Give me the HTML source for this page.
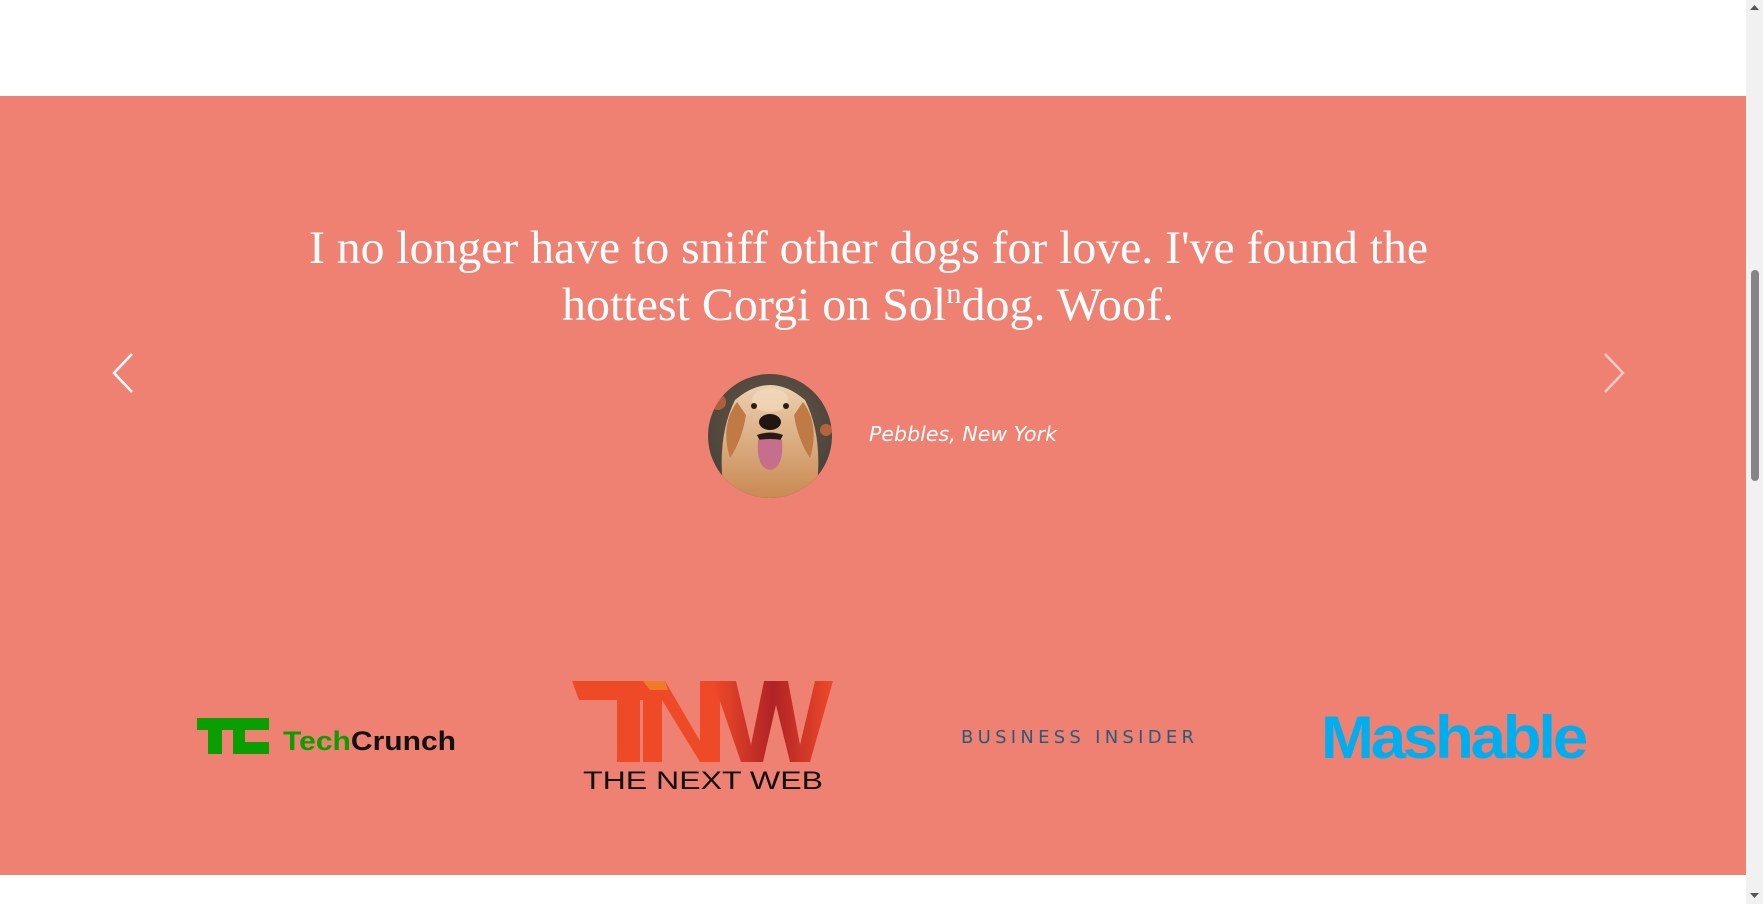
<!DOCTYPE html>
<html><head><meta charset="utf-8"><style>
html,body{margin:0;padding:0;width:1763px;height:904px;overflow:hidden;background:#fff}
</style></head><body>
<svg width="1763" height="904" viewBox="0 0 1763 904" xmlns="http://www.w3.org/2000/svg" style="display:block">
<defs>
<clipPath id="c"><circle cx="770" cy="436" r="62"/></clipPath>
<radialGradient id="bg" cx="0.5" cy="0.4" r="0.7"><stop offset="0" stop-color="#6a5a4a"/><stop offset="1" stop-color="#3e3a34"/></radialGradient>
<linearGradient id="fur" x1="0" y1="0" x2="0" y2="1"><stop offset="0" stop-color="#ecd0b0"/><stop offset="1" stop-color="#c98850"/></linearGradient>
<linearGradient id="tw" x1="0" y1="0" x2="1" y2="0"><stop offset="0" stop-color="#ef4a28"/><stop offset="0.5" stop-color="#b02326"/><stop offset="1" stop-color="#ef4a28"/></linearGradient>
</defs>
<rect x="0" y="96" width="1746" height="779" fill="#ef8172"/>
<rect x="1746" y="0" width="17" height="904" fill="#f1f1f1"/>
<rect x="1751" y="270" width="8" height="211" rx="4" fill="#858585"/>
<path d="M1750 10 l4.5 -5 l4.5 5z" fill="#555"/>
<path d="M1750 893 l4.5 5 l4.5 -5z" fill="#555"/>

<g font-family="Liberation Serif, serif" fill="#fff" font-size="47">
<text x="309" y="263" textLength="1119" lengthAdjust="spacingAndGlyphs">I no longer have to sniff other dogs for love. I've found the</text>
<text x="562" y="320" textLength="612" lengthAdjust="spacingAndGlyphs">hottest Corgi on Sol<tspan font-size="30" dy="-17">n</tspan><tspan dy="17">dog. Woof.</tspan></text>
</g>

<path d="M132 354 L114 373 L132 392" fill="none" stroke="#fff" stroke-width="2.5"/>
<path d="M1605 354 L1623 373 L1605 392" fill="none" stroke="#fff" stroke-opacity="0.6" stroke-width="2.5"/>

<g clip-path="url(#c)">
<rect x="700" y="370" width="140" height="140" fill="url(#bg)"/>
<circle cx="718" cy="402" r="8" fill="#d86a3a" opacity="0.7"/>
<circle cx="826" cy="430" r="6" fill="#e0713c" opacity="0.7"/>
<path d="M735 400 Q770 370 805 400 Q825 440 815 500 L725 500 Q715 440 735 400z" fill="url(#fur)"/>
<path d="M737 402 Q720 425 730 458 Q742 440 746 415z" fill="#c07a45"/>
<path d="M803 402 Q820 425 810 458 Q798 440 794 415z" fill="#c07a45"/>
<ellipse cx="770" cy="400" rx="18" ry="12" fill="#f3dcc0" opacity="0.6"/>
<circle cx="754" cy="406" r="3" fill="#2b1d15"/><circle cx="786" cy="406" r="3" fill="#2b1d15"/>
<ellipse cx="770" cy="422" rx="11" ry="8" fill="#1e1714"/>
<path d="M757 435 Q770 430 783 435 L778 445 L762 445z" fill="#2a1a16"/>
<path d="M758 440 Q770 438 782 440 Q784 468 770 470 Q756 468 758 440z" fill="#c66f8c"/>
</g>

<text x="869" y="441" font-family="DejaVu Sans, Liberation Sans, sans-serif" font-style="italic" font-size="20" fill="#fff" textLength="188" lengthAdjust="spacingAndGlyphs">Pebbles, New York</text>

<g fill="#0a9e01">
<rect x="197" y="718" width="36" height="12"/><rect x="208" y="718" width="14" height="36"/>
<rect x="233" y="718" width="36" height="12"/><rect x="233" y="718" width="12" height="36"/><rect x="233" y="742" width="36" height="12"/>
</g>
<text x="283" y="750" font-family="Liberation Sans, sans-serif" font-weight="bold" font-size="27" textLength="173" lengthAdjust="spacingAndGlyphs"><tspan fill="#0a9e01">Tech</tspan><tspan fill="#111">Crunch</tspan></text>

<g>
<path d="M572 681 L655 681 L655 700 L640 700 L640 762 L617 762 L617 700 L579 700z" fill="#ef4a28"/>
<path d="M643 681 L665 681 L700 741 L700 681 L720 681 L720 762 L700 762 L662 700 L662 762 L643 762z" fill="#ef4a28"/>
<path d="M643 681 L665 681 L668 690 L650 690z" fill="#f07a28"/>
<path d="M713 681 L736 681 L751 745 L764 681 L788 681 L800 745 L815 681 L833 681 L810 762 L790 762 L776 705 L763 762 L741 762z" fill="url(#tw)"/>
<text x="583" y="789" font-family="Liberation Sans, sans-serif" font-size="25" fill="#111" textLength="240" lengthAdjust="spacingAndGlyphs">THE NEXT WEB</text>
</g>

<text x="961" y="743" font-family="DejaVu Sans, Liberation Sans, sans-serif" font-size="18" fill="#2a5a78" textLength="233" lengthAdjust="spacing">BUSINESS INSIDER</text>

<text x="1321" y="758" font-family="Liberation Sans, sans-serif" font-weight="bold" font-size="60" fill="#00aeef" textLength="264" lengthAdjust="spacingAndGlyphs" letter-spacing="-3">Mashable</text>
</svg>
</body></html>
